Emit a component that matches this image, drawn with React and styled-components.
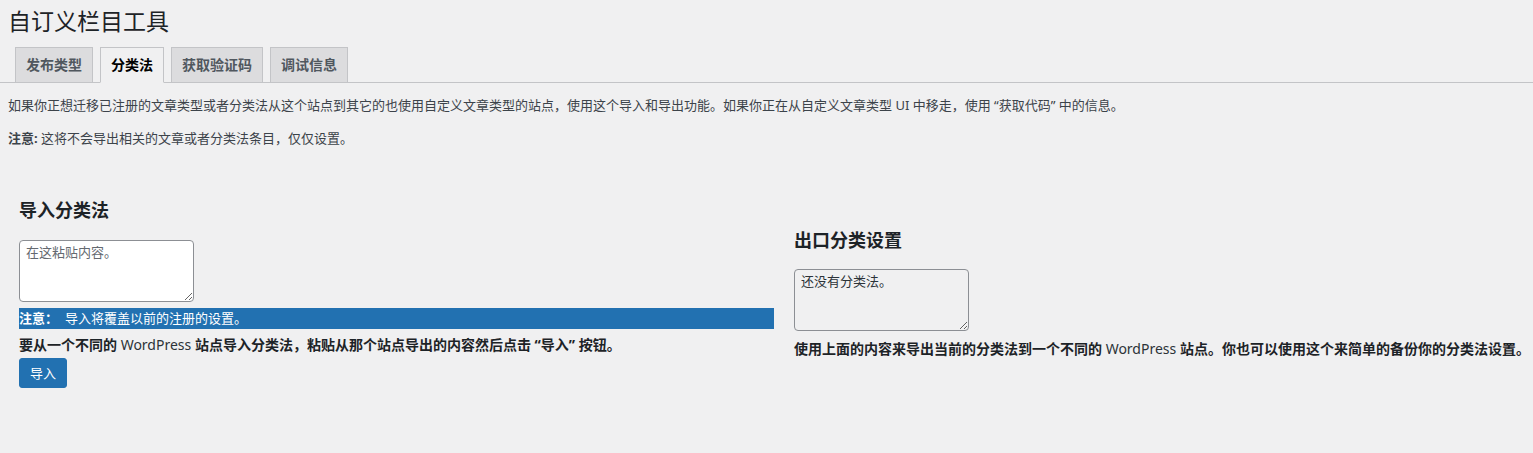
import React from "react";
import styled, { createGlobalStyle } from "styled-components";

const Global = createGlobalStyle`
  html, body { margin: 0; padding: 0; background: #f0f0f1; }
  body {
    font-family: "Noto Sans", "Noto Sans CJK SC", sans-serif;
    font-size: 13px;
    color: #3c434a;
  }
  * { box-sizing: border-box; }
`;

const Wrap = styled.div`
  width: 1533px;
  min-height: 453px;
`;

const Title = styled.h1`
  margin: 0;
  padding: 6px 0 4px 8px;
  font-size: 23px;
  line-height: 30px;
  font-weight: 400;
  color: #1d2327;
`;

const TabBar = styled.nav`
  display: flex;
  gap: 7px;
  margin-top: 7px;
  padding-left: 15px;
  border-bottom: 1px solid #c3c4c7;
`;

const Tab = styled.a`
  display: block;
  margin-bottom: -1px;
  padding: 5px 10px;
  font-size: 14px;
  line-height: 24px;
  font-weight: 700;
  text-decoration: none;
  border: 1px solid #c3c4c7;
  border-bottom-color: ${(p) => (p.$active ? "#f0f0f1" : "#c3c4c7")};
  background: ${(p) => (p.$active ? "#f0f0f1" : "#dcdcde")};
  color: ${(p) => (p.$active ? "#000" : "#50575e")};
`;

const Para = styled.p`
  margin: 13px 0;
  padding-left: 8px;
  font-size: 13px;
  line-height: 19.5px;
  color: #3c434a;
`;

const Columns = styled.div`
  display: flex;
  align-items: center;
  gap: 20px;
  margin-top: 50px;
  padding-left: 19px;
`;

const LeftCol = styled.section`
  width: 755px;
  flex: none;
`;

const RightCol = styled.section`
  flex: 1;
  min-width: 0;
`;

const Heading = styled.h2`
  margin: 0 0 ${(p) => p.$gap}px;
  font-size: 18px;
  line-height: 24px;
  font-weight: 700;
  color: #1d2327;
`;

const Area = styled.textarea`
  display: block;
  width: 175px;
  height: 62px;
  padding: 2px 6px;
  border: 1px solid #8c8f94;
  border-radius: 4px;
  font-family: "Noto Sans", "Noto Sans CJK SC", sans-serif;
  font-size: 13px;
  line-height: 18.5px;
  color: #2c3338;
  background: ${(p) => (p.$readOnlyLook ? "#f0f0f1" : "#fff")};
  resize: both;
  outline: none;
  &::placeholder { color: #646970; }
`;

const Notice = styled.div`
  margin-top: 6px;
  background: #2271b1;
  color: #fff;
  font-size: 13px;
  line-height: 21px;
  white-space: nowrap;
`;

const NoticeLabel = styled.strong`
  font-weight: 700;
  margin-right: 7px;
`;

const Desc = styled.p`
  margin: ${(p) => p.$top}px 0 0;
  font-size: 14px;
  line-height: 21px;
  font-weight: 700;
  color: #1d2327;
  white-space: nowrap;
`;

const Latin = styled.span`
  font-weight: 400;
  color: #2c3338;
`;

const Button = styled.button`
  display: block;
  margin-top: 3px;
  height: 30px;
  padding: 0 10px;
  border: 1px solid #2271b1;
  border-radius: 3px;
  background: #2271b1;
  color: #fff;
  font-family: "Noto Sans", "Noto Sans CJK SC", sans-serif;
  font-size: 13px;
  line-height: 28px;
  cursor: pointer;
`;

export default function App() {
  return (
    <Wrap>
      <Global />
      <Title>自订义栏目工具</Title>
      <TabBar>
        <Tab>发布类型</Tab>
        <Tab $active>分类法</Tab>
        <Tab>获取验证码</Tab>
        <Tab>调试信息</Tab>
      </TabBar>
      <Para>
        如果你正想迁移已注册的文章类型或者分类法从这个站点到其它的也使用自定义文章类型的站点，使用这个导入和导出功能。如果你正在从自定义文章类型 UI 中移走，使用 “获取代码” 中的信息。
      </Para>
      <Para>
        <strong>注意:</strong> 这将不会导出相关的文章或者分类法条目，仅仅设置。
      </Para>
      <Columns>
        <LeftCol>
          <Heading $gap={18}>导入分类法</Heading>
          <Area placeholder="在这粘贴内容。" />
          <Notice>
            <NoticeLabel>注意：</NoticeLabel>导入将覆盖以前的注册的设置。
          </Notice>
          <Desc $top={5}>
            要从一个不同的 <Latin>WordPress</Latin> 站点导入分类法，粘贴从那个站点导出的内容然后点击 “导入” 按钮。
          </Desc>
          <Button>导入</Button>
        </LeftCol>
        <RightCol>
          <Heading $gap={17}>出口分类设置</Heading>
          <Area $readOnlyLook readOnly defaultValue="还没有分类法。" />
          <Desc $top={7}>
            使用上面的内容来导出当前的分类法到一个不同的 <Latin>WordPress</Latin> 站点。你也可以使用这个来简单的备份你的分类法设置。
          </Desc>
        </RightCol>
      </Columns>
    </Wrap>
  );
}
